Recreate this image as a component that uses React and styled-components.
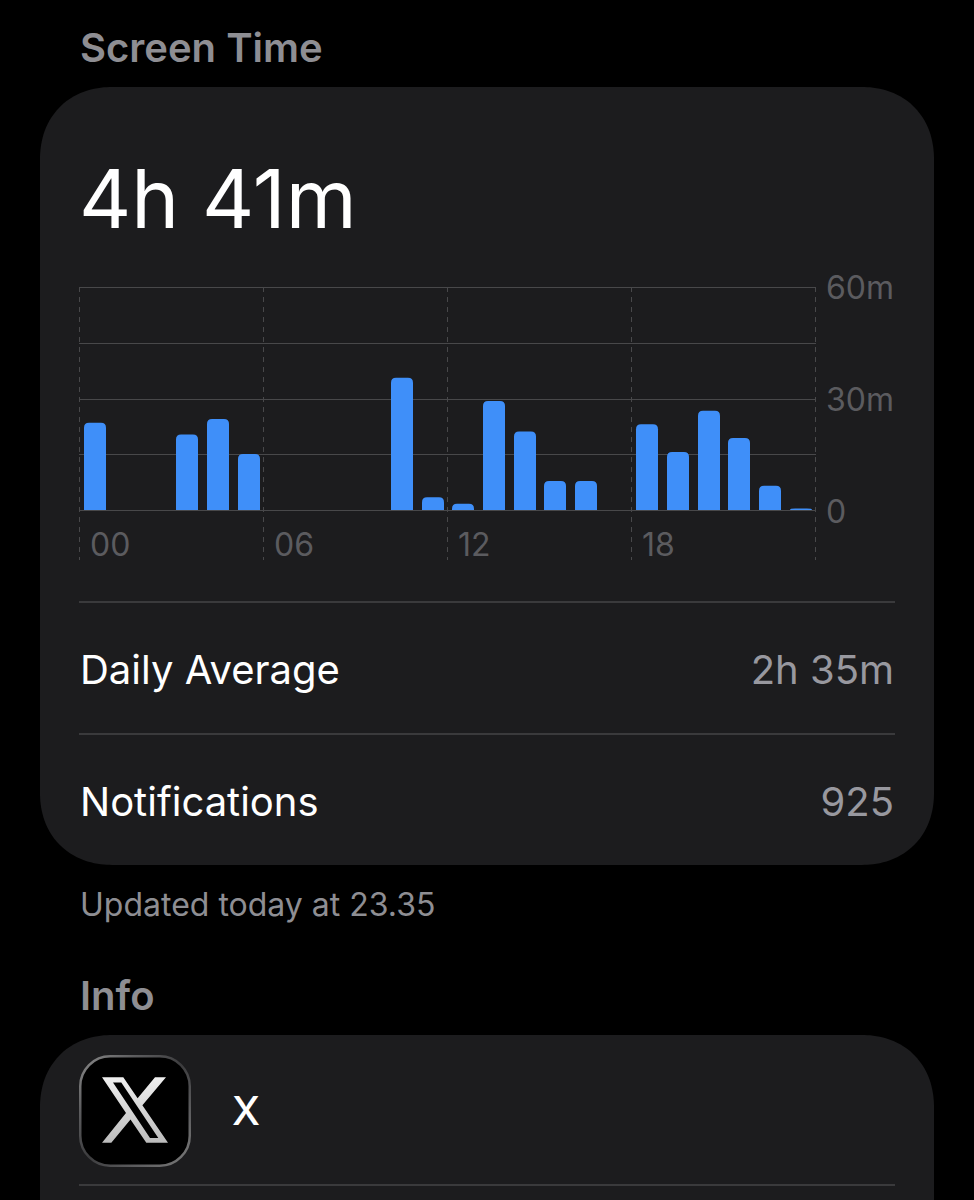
import React from "react";
import styled, { createGlobalStyle } from "styled-components";

const GlobalStyle = createGlobalStyle`
  * {
    box-sizing: border-box;
  }
  body {
    margin: 0;
    background: #000;
    color: #fff;
    font-family: Inter, "Liberation Sans", sans-serif;
    font-size: 40px;
    line-height: 50px;
  }
`;

const Page = styled.main`
  height: 100vh;
  overflow: hidden;
  padding: 23px 40px 0;
`;

const SectionTitle = styled.h2`
  margin: 0;
  padding: 0 40px 14px;
  color: #8e8e93;
  font-size: inherit;
  font-weight: 600;
`;

const Card = styled.section`
  padding: 0 39px;
  background: #1c1c1e;
  border-radius: 68px;
  @supports (corner-shape: superellipse(1.1)) {
    border-radius: 72px;
    corner-shape: superellipse(1.1);
  }
`;

const Total = styled.div`
  padding: 62px 0 38px;
  font-size: 81px;
  line-height: 100px;
`;

const ChartSvg = styled.svg`
  display: block;
  width: 100%;
  overflow: visible;
  margin-bottom: 41px;
`;

const GridLine = styled.line`
  stroke: #48484a;
  stroke-dasharray: ${({ $dashed }) => ($dashed ? "5 5" : "none")};
`;

const AxisLabel = styled.text`
  fill: #5b5b5f;
  font-size: 32px;
`;

const Row = styled.div`
  display: flex;
  align-items: center;
  justify-content: space-between;
  min-height: 132px;
  padding: 4px 1px 0;
  border-top: 2px solid #3a3a3c;
`;

const Value = styled.span`
  color: #98989f;
`;

const Footnote = styled.p`
  margin: 0;
  padding: 20px 40px 46px;
  color: #8e8e93;
  font-size: 32px;
  line-height: 40px;
`;

const AppRow = styled.div`
  display: flex;
  align-items: center;
  gap: 41px;
  padding: 20px 0 17px;
`;

const AppName = styled.span`
  font-weight: 500;
`;

const InfoBody = styled.div`
  min-height: 132px;
  border-top: 2px solid #3a3a3c;
`;

// minutes of use for each hour of the day
const usage = [
  23.5, 0, 0, 20.3, 24.5, 15.1, 0, 0, 0, 0, 35.6, 3.4,
  1.7, 29.3, 21.1, 7.8, 7.8, 0, 23.1, 15.6, 26.7, 19.4, 6.5, 0.4
];

const PLOT_WIDTH = 736;
const PLOT_HEIGHT = 223;
const BAR_WIDTH = 22;

const barPath = (hour, minutes) => {
  const slot = PLOT_WIDTH / 24;
  const x = Math.round(hour * slot + (slot - BAR_WIDTH) / 2) + 1;
  const h = (minutes / 60) * PLOT_HEIGHT;
  const r = 5;
  const ry = Math.min(r, h);
  return `M${x} ${PLOT_HEIGHT}v${ry - h}q0 ${-ry} ${r} ${-ry}h${BAR_WIDTH -
    2 * r}q${r} 0 ${r} ${ry}v${h - ry}z`;
};

const Chart = () => (
  <ChartSvg viewBox="0 0 816 273" role="img" aria-label="Usage by hour">
    {[0, 56, 112, 167, 223].map(y => (
      <GridLine key={y} x1="0" x2={PLOT_WIDTH + 1} y1={y + 0.5} y2={y + 0.5} />
    ))}
    {[0, 184, 368, 552, 736].map(x => (
      <GridLine key={x} $dashed x1={x + 0.5} x2={x + 0.5} y1="0" y2="273" />
    ))}
    {usage.map(
      (minutes, hour) =>
        minutes > 0 && (
          <path key={hour} d={barPath(hour, minutes)} fill="#3f8ff9" />
        )
    )}
    {["60m", "30m", "0"].map((label, i) => (
      <AxisLabel key={label} x="747" y={12 + i * 112}>
        {label}
      </AxisLabel>
    ))}
    {["00", "06", "12", "18"].map((label, i) => (
      <AxisLabel key={label} x={11 + i * 184} y="269">
        {label}
      </AxisLabel>
    ))}
  </ChartSvg>
);

const AppIcon = () => (
  <svg width="112" height="112" viewBox="0 0 112 112" aria-hidden="true">
    <defs>
      <linearGradient id="edge" x1="0" y1="0" x2="1" y2="1">
        <stop offset="0" stopColor="#8a8a8a" />
        <stop offset="0.25" stopColor="#5c5c5e" />
        <stop offset="0.5" stopColor="#3c3c3e" />
        <stop offset="0.75" stopColor="#5c5c5e" />
        <stop offset="1" stopColor="#7a7a7a" />
      </linearGradient>
      <linearGradient id="mark" x1="0" y1="0" x2="0" y2="1">
        <stop offset="0" stopColor="#f0f0f0" />
        <stop offset="1" stopColor="#bcbcbc" />
      </linearGradient>
    </defs>
    <rect
      x="1.25"
      y="1.25"
      width="109.5"
      height="109.5"
      rx="30"
      fill="#000"
      stroke="url(#edge)"
      strokeWidth="2.5"
    />
    <path
      d="M23 22.3H44.3L58.6 43.3L76 22.3H87L63.4 50.2L89 87.7H67.3L51.5 64.5L32.3 87.7H23L47 58ZM34 27.5L71 83H79.3L42.3 27.5Z"
      fill="url(#mark)"
      fillRule="evenodd"
    />
  </svg>
);

const App = () => (
  <>
    <GlobalStyle />
    <Page>
      <SectionTitle>Screen Time</SectionTitle>
      <Card>
        <Total>4h 41m</Total>
        <Chart />
        <Row>
          <span>Daily Average</span>
          <Value>2h 35m</Value>
        </Row>
        <Row>
          <span>Notifications</span>
          <Value>925</Value>
        </Row>
      </Card>
      <Footnote>Updated today at 23.35</Footnote>
      <SectionTitle>Info</SectionTitle>
      <Card>
        <AppRow>
          <AppIcon />
          <AppName>X</AppName>
        </AppRow>
        <InfoBody />
      </Card>
    </Page>
  </>
);

export default App;
